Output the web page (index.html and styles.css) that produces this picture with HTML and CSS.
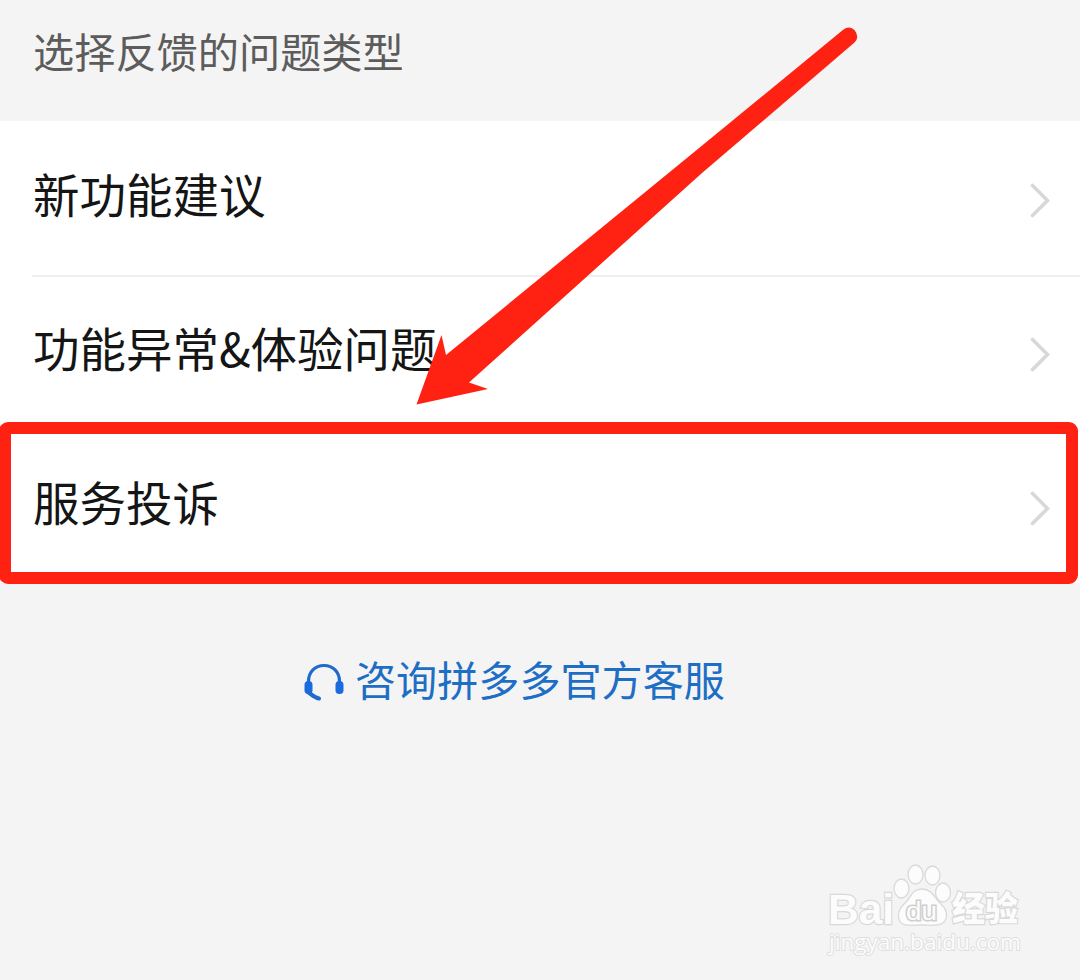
FILE: index.html
```
<!DOCTYPE html>
<html lang="zh-CN">

<head>
    <meta charset="UTF-8">
    <title>意见反馈</title>
    <link rel="stylesheet" href="styles.css">
</head>

<body>

    <div class="page">
        <h1 class="title">选择反馈的问题类型</h1>

        <div class="list">
            <a class="item">
                <span>新功能建议</span>
                <svg class="chevron" viewBox="0 0 20 36"><path d="M2.500 3.500 L17.5 18.500 L2.500 33.500" /></svg>
            </a>
            <a class="item">
                <span>功能异常&amp;体验问题</span>
                <svg class="chevron" viewBox="0 0 20 36"><path d="M2.500 3.500 L17.5 18.500 L2.500 33.500" /></svg>
            </a>
            <a class="item">
                <span>服务投诉</span>
                <svg class="chevron" viewBox="0 0 20 36"><path d="M2.500 3.500 L17.5 18.500 L2.500 33.500" /></svg>
            </a>
        </div>

        <a class="service">
            <svg class="headset" viewBox="0 0 40 40">
                <path class="band" d="M4.5 22 V18.5 C4.5 9 11 2.500 20 2.500 S35.500 9 35.500 18.500 V22" />
                <rect x="0.500" y="18" width="8" height="13" rx="3.800" />
                <rect x="31.500" y="18" width="8" height="13" rx="3.800" />
                <path class="mic" d="M4 29 C7 31 10 34.500 15 35.500" />
            </svg>
            <span>咨询拼多多官方客服</span>
        </a>

        <!-- marks -->
        <div class="mark-box"></div>
        <svg class="mark-arrow" viewBox="0 0 1080 420">
            <path d="M843.500 29.500 Q849 25.500 854.500 30 Q860 37 854.500 42.500 L702 173 L469 382.500 L488 389 L416.500 404.500 L441.500 335 L446 355 L693 153 Z" />
        </svg>

        <!-- watermark -->
        <svg class="watermark" viewBox="0 0 210 110">
            <text class="logo-text" x="8" y="64" textLength="66" lengthAdjust="spacingAndGlyphs">Bai</text>
            <ellipse cx="81.500" cy="28.500" rx="7.500" ry="9.500" />
            <ellipse cx="95.500" cy="14.500" rx="7.500" ry="9.500" />
            <ellipse cx="112.500" cy="15.500" rx="7.500" ry="9.500" />
            <ellipse cx="123" cy="32.500" rx="7.500" ry="9.500" />
            <path d="M102 29 C112 29 114 37 119 42 C124 47 127 50 126.500 56 C125 68 113 65 102 65 C91 65 80 68 78.500 57 C78 50 81 47 86 42 C91 37 92 29 102 29 Z" />
            <text class="du" x="86" y="60" textLength="31" lengthAdjust="spacingAndGlyphs">du</text>
            <text class="cn" x="132" y="61" textLength="66" lengthAdjust="spacingAndGlyphs">经验</text>
            <text class="url" x="9" y="90" textLength="192" lengthAdjust="spacingAndGlyphs">jingyan.baidu.com</text>
        </svg>
    </div>

</body>

</html>
```
FILE: styles.css
```
* {
    box-sizing: border-box;
}

body {
    margin: 0;
    font-family: "Noto Sans CJK SC", sans-serif;
    background-color: #f4f4f4;
    color: #151515;
}

.page {
    position: relative;
    height: 980px;
    overflow: hidden;
}

.title {
    margin: 0;
    height: 121px;
    padding: 20px 33px 0;
    font-size: 41.2px;
    line-height: 60px;
    font-weight: 400;
    color: #5c5c5c;
}

.list {
    background-color: #fff;
    padding-left: 32px;
}

.item {
    display: flex;
    align-items: center;
    justify-content: space-between;
    height: 154px;
    padding: 0 30px 0 1px;
    font-size: 46.5px;
    line-height: 60px;
}

.item span {
    margin-top: -11px;
}

.item + .item {
    border-top: 2px solid #f0f0f0;
}

.item + .item span {
    margin-top: -13px;
}

.item:last-child {
    border-top-color: #f7f7fb;
}

.chevron {
    width: 20px;
    height: 36px;
    margin-top: 4px;
    fill: none;
    stroke: #d8d8d8;
    stroke-width: 3.6;
    stroke-linecap: round;
}

.item + .item .chevron {
    margin-top: 2px;
}

.service {
    display: flex;
    align-items: center;
    margin: 65px 0 0 304px;
    font-size: 41.1px;
    line-height: 60px;
    color: #1d6ec4;
}

.headset {
    width: 40px;
    height: 40px;
    margin: 9px 11px 0 0;
    fill: #1b6be0;
}

.headset .band,
.headset .mic {
    fill: none;
    stroke: #1f6bcd;
    stroke-width: 3.2;
    stroke-linecap: round;
}

.headset .mic {
    stroke-width: 4;
}

/* marks */
.mark-box {
    position: absolute;
    top: 422px;
    left: -1px;
    width: 1079px;
    height: 162px;
    border: 12px solid #ff2112;
    border-radius: 9px;
}

.mark-arrow {
    position: absolute;
    top: 0;
    left: 0;
    width: 1080px;
    height: 420px;
    fill: #ff2112;
}

/* watermark */
.watermark {
    position: absolute;
    left: 820px;
    top: 860px;
    width: 210px;
    height: 110px;
    fill: #fcfcfc;
    stroke: #d9d9d9;
    stroke-width: 1.3;
    overflow: visible;
}

.watermark text {
    paint-order: stroke;
    stroke-width: 2.4;
}

.logo-text {
    font: bold 43px "Liberation Sans", sans-serif;
}

.watermark .du {
    font: 26px "Liberation Sans", sans-serif;
    stroke: #cfcfcf;
    stroke-width: 3;
}

.cn {
    font: 900 34px "Noto Sans CJK SC", sans-serif;
}

.watermark .url {
    font: 21px "Open Sans", sans-serif;
    stroke: #dedede;
    stroke-width: 1.8;
}
```
